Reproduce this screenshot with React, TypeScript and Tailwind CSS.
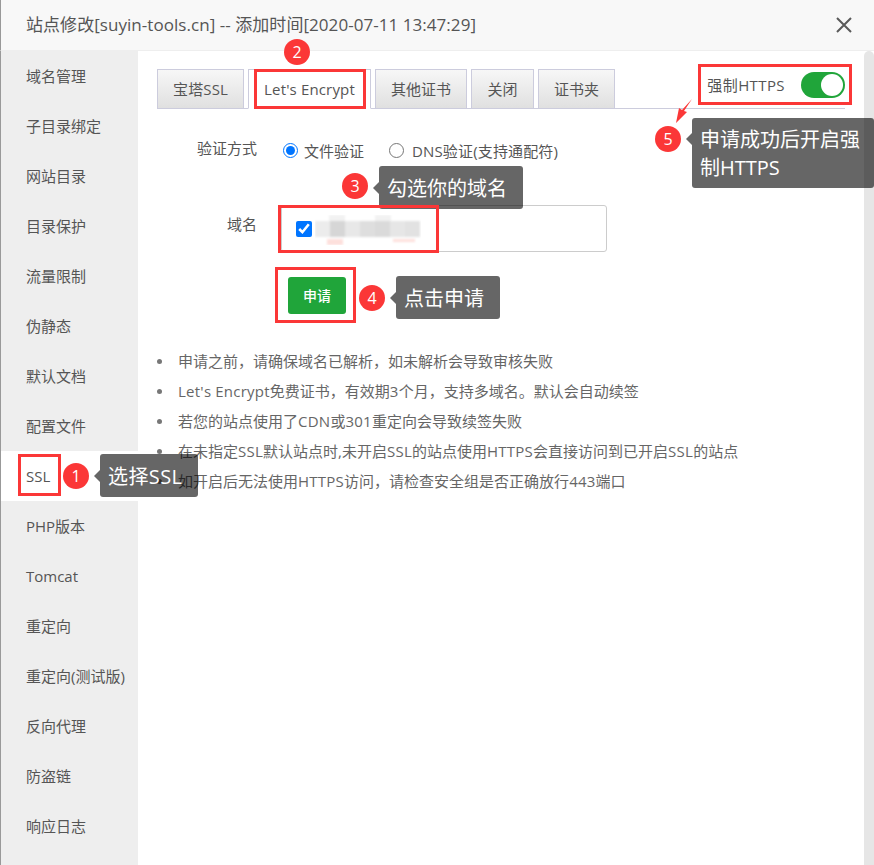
import React from "react";

const side = ["域名管理","子目录绑定","网站目录","目录保护","流量限制","伪静态","默认文档","配置文件","SSL","PHP版本","Tomcat","重定向","重定向(测试版)","反向代理","防盗链","响应日志"];
const tips = [
  "申请之前，请确保域名已解析，如未解析会导致审核失败",
  "Let's Encrypt免费证书，有效期3个月，支持多域名。默认会自动续签",
  "若您的站点使用了CDN或301重定向会导致续签失败",
  "在未指定SSL默认站点时,未开启SSL的站点使用HTTPS会直接访问到已开启SSL的站点",
  "如开启后无法使用HTTPS访问，请检查安全组是否正确放行443端口",
];

function Tab({ label, w, active, wide }: { label: string; w: string; active?: boolean; wide?: boolean }) {
  return (
    <div className={`${w} h-[40px] flex items-center justify-center pt-[1px] border border-[#ccd] text-[15px] text-[#555] ${wide ? "tracking-[0.15px]" : ""} ${active ? "bg-white border-b-white" : "bg-gradient-to-b from-[#f7f7f7] to-[#e0e0e0]"} -mb-px`}>
      {label}
    </div>
  );
}

function Num({ n, cls }: { n: number; cls: string }) {
  return (
    <div className={`absolute ${cls} w-[26px] h-[26px] rounded-full bg-[#fb3737] text-white text-[16px] flex items-center justify-center`}>{n}</div>
  );
}

function Note({ text, cls }: { text: string; cls: string }) {
  return (
    <div className={`absolute ${cls} bg-black/60 text-white text-[20px] leading-[28px] rounded-[3px] pl-[8px] pt-[2px] flex items-center`}>
      <span className="absolute left-[-6px] top-1/2 -mt-[6px] w-0 h-0 border-y-[6px] border-y-transparent border-r-[6px] border-r-[#666666]" />
      {text}
    </div>
  );
}

function Box({ cls }: { cls: string }) {
  return <div className={`absolute ${cls} border-[3px] border-[#fb3737]`} />;
}

function Tip({ text }: { text: string }) {
  const parts = text.split(/([A-Za-z0-9']+)/);
  return (
    <>
      {parts.map((p, i) => (
        <span key={i} className={i % 2 ? "tracking-[0.25px]" : ""}>{p}</span>
      ))}
    </>
  );
}

export default function App() {
  return (
    <div className="relative w-[874px] h-[865px] overflow-hidden bg-white font-['Open_Sans','Noto_Sans_CJK_SC',sans-serif] text-[#555]">
      <div className="h-[51px] bg-[#f8f8f8] border-b border-[#eeeeee] border-l border-l-[#999] flex items-center justify-between pl-[25px] pr-[22px]">
        <span className="text-[17px] text-[#555] tracking-[0.05px]">站点修改[suyin-tools.cn] -- 添加时间[2020-07-11 13:47:29]</span>
        <svg width="16" height="16" viewBox="0 0 16 16"><path d="M1 1 L15 15 M15 1 L1 15" stroke="#5a5a5a" strokeWidth="2" /></svg>
      </div>
      <div className="flex h-[814px]">
        <div className="w-[138px] bg-[#eeeeee] shrink-0 border-l border-l-[#999]">
          {side.map((s) => (
            <div key={s} className={`h-[50px] flex items-center pl-[25px] text-[15px] text-[#555] ${s === "SSL" ? "bg-white" : ""}`}>{s}</div>
          ))}
        </div>
        <div className="flex-1 pl-[19px] pt-[18px] pr-[29px]">
          <div className="flex gap-[4px] border-b border-[#ccd] h-[40px]">
            <Tab label="宝塔SSL" w="w-[87px]" wide />
            <Tab label="Let's Encrypt" w="w-[123px]" active wide />
            <Tab label="其他证书" w="w-[92px]" />
            <Tab label="关闭" w="w-[63px]" />
            <Tab label="证书夹" w="w-[77px]" />
            <div className="ml-auto flex items-center h-[32px] gap-[16px] text-[15px] text-[#555]">
              <span className="tracking-[0.4px]">强制HTTPS</span>
              <span className="relative w-[44px] h-[26px] rounded-full bg-[#20a53a]">
                <span className="absolute right-[2px] top-[2px] w-[22px] h-[22px] rounded-full bg-white" />
              </span>
            </div>
          </div>
          <div className="flex items-center mt-[29px] h-[24px] text-[15px]">
            <span className="w-[100px] text-right text-[#555] mb-[4px]">验证方式</span>
            <input type="radio" defaultChecked className="w-[15px] h-[15px] ml-[26px] accent-[#0075ff]" />
            <span className="ml-[6px] mt-[2px]">文件验证</span>
            <input type="radio" className="w-[15px] h-[15px] ml-[25px]" />
            <span className="ml-[8px] mt-[2px] tracking-[0.15px]">DNS验证(支持通配符)</span>
          </div>
          <div className="flex mt-[43px]">
            <span className="w-[100px] text-right text-[15px] text-[#555] pt-[8px]">域名</span>
            <div className="ml-[24px] w-[326px] h-[47px] border border-[#ccc] rounded-[3px] flex items-center pl-[14px]">
              <input type="checkbox" defaultChecked className="w-[16px] h-[16px] accent-[#0075ff]" />
              <svg width="106" height="30" viewBox="0 0 106 30" className="ml-[3px] mt-[2px]">
                <g style={{ filter: "blur(1px)" }}>
                  <rect x="14" y="0" width="16" height="9" fill="#f2f2f2" />
                  <rect x="60" y="0" width="16" height="9" fill="#f2f2f2" />
                  <rect x="12" y="24" width="16" height="6" fill="#fde0dc" />
                  <rect x="78" y="24" width="22" height="3" fill="#fde0dc" />
                  <rect x="0" y="6" width="15" height="16" fill="#ececec" />
                  <rect x="15" y="6" width="15" height="16" fill="#d6d6d6" />
                  <rect x="30" y="6" width="15" height="16" fill="#e8e8e8" />
                  <rect x="45" y="6" width="15" height="16" fill="#dedede" />
                  <rect x="60" y="6" width="15" height="16" fill="#dadada" />
                  <rect x="75" y="6" width="15" height="16" fill="#e6e6e6" />
                  <rect x="90" y="6" width="15" height="16" fill="#e2e2e2" />
                </g>
              </svg>
            </div>
          </div>
          <button className="block ml-[131px] mt-[25px] w-[58px] h-[37px] rounded-[3px] bg-[#20a53a] text-white text-[14px] font-medium">申请</button>
          <ul className="mt-[32px] text-[15px] text-[#666]">
            {tips.map((t) => (
              <li key={t} className="h-[30px] flex items-center pl-[21px] relative whitespace-pre">
                <span className="absolute left-[0px] top-[13px] w-[5px] h-[5px] rounded-full bg-[#777]" />
                <span><Tip text={t} /></span>
              </li>
            ))}
          </ul>
        </div>
        <div className="absolute right-0 top-[51px] w-[10px] h-[814px] bg-[#e6e6e6] rounded-t-full" />
      </div>

      <Note text="选择SSL" cls="left-[100px] top-[454px] h-[43px] w-[98px] tracking-[0.4px]" />
      <Note text="勾选你的域名" cls="left-[379px] top-[166px] h-[43px] w-[144px]" />
      <Note text="点击申请" cls="left-[396px] top-[276px] h-[43px] w-[104px]" />
      <div className="absolute left-[692px] top-[118px] w-[182px] h-[70px] bg-black/60 rounded-[3px] text-white text-[20px] leading-[28px] pl-[8px] pt-[8px]">
        <span className="absolute left-[-6px] top-[15px] w-0 h-0 border-y-[6px] border-y-transparent border-r-[6px] border-r-[#666666]" />
        申请成功后开启强<br />制HTTPS
      </div>
      <svg className="absolute left-[674px] top-[97px]" width="22" height="28" viewBox="0 0 22 28">
        <path d="M18 2 L10 14 L13 15 L2 26 L5 11 L8 13 Z" fill="#fb3737" />
      </svg>

      <Box cls="left-[18px] top-[454px] w-[43px] h-[42px]" />
      <Box cls="left-[254px] top-[69px] w-[112px] h-[40px]" />
      <Box cls="left-[278px] top-[205px] w-[161px] h-[48px]" />
      <Box cls="left-[275px] top-[267px] w-[81px] h-[56px]" />
      <Box cls="left-[698px] top-[64px] w-[154px] h-[41px]" />

      <Num n={1} cls="left-[63px] top-[463px]" />
      <Num n={2} cls="left-[284px] top-[39px]" />
      <Num n={3} cls="left-[342px] top-[173px]" />
      <Num n={4} cls="left-[359px] top-[285px]" />
      <Num n={5} cls="left-[655px] top-[126px]" />
    </div>
  );
}
